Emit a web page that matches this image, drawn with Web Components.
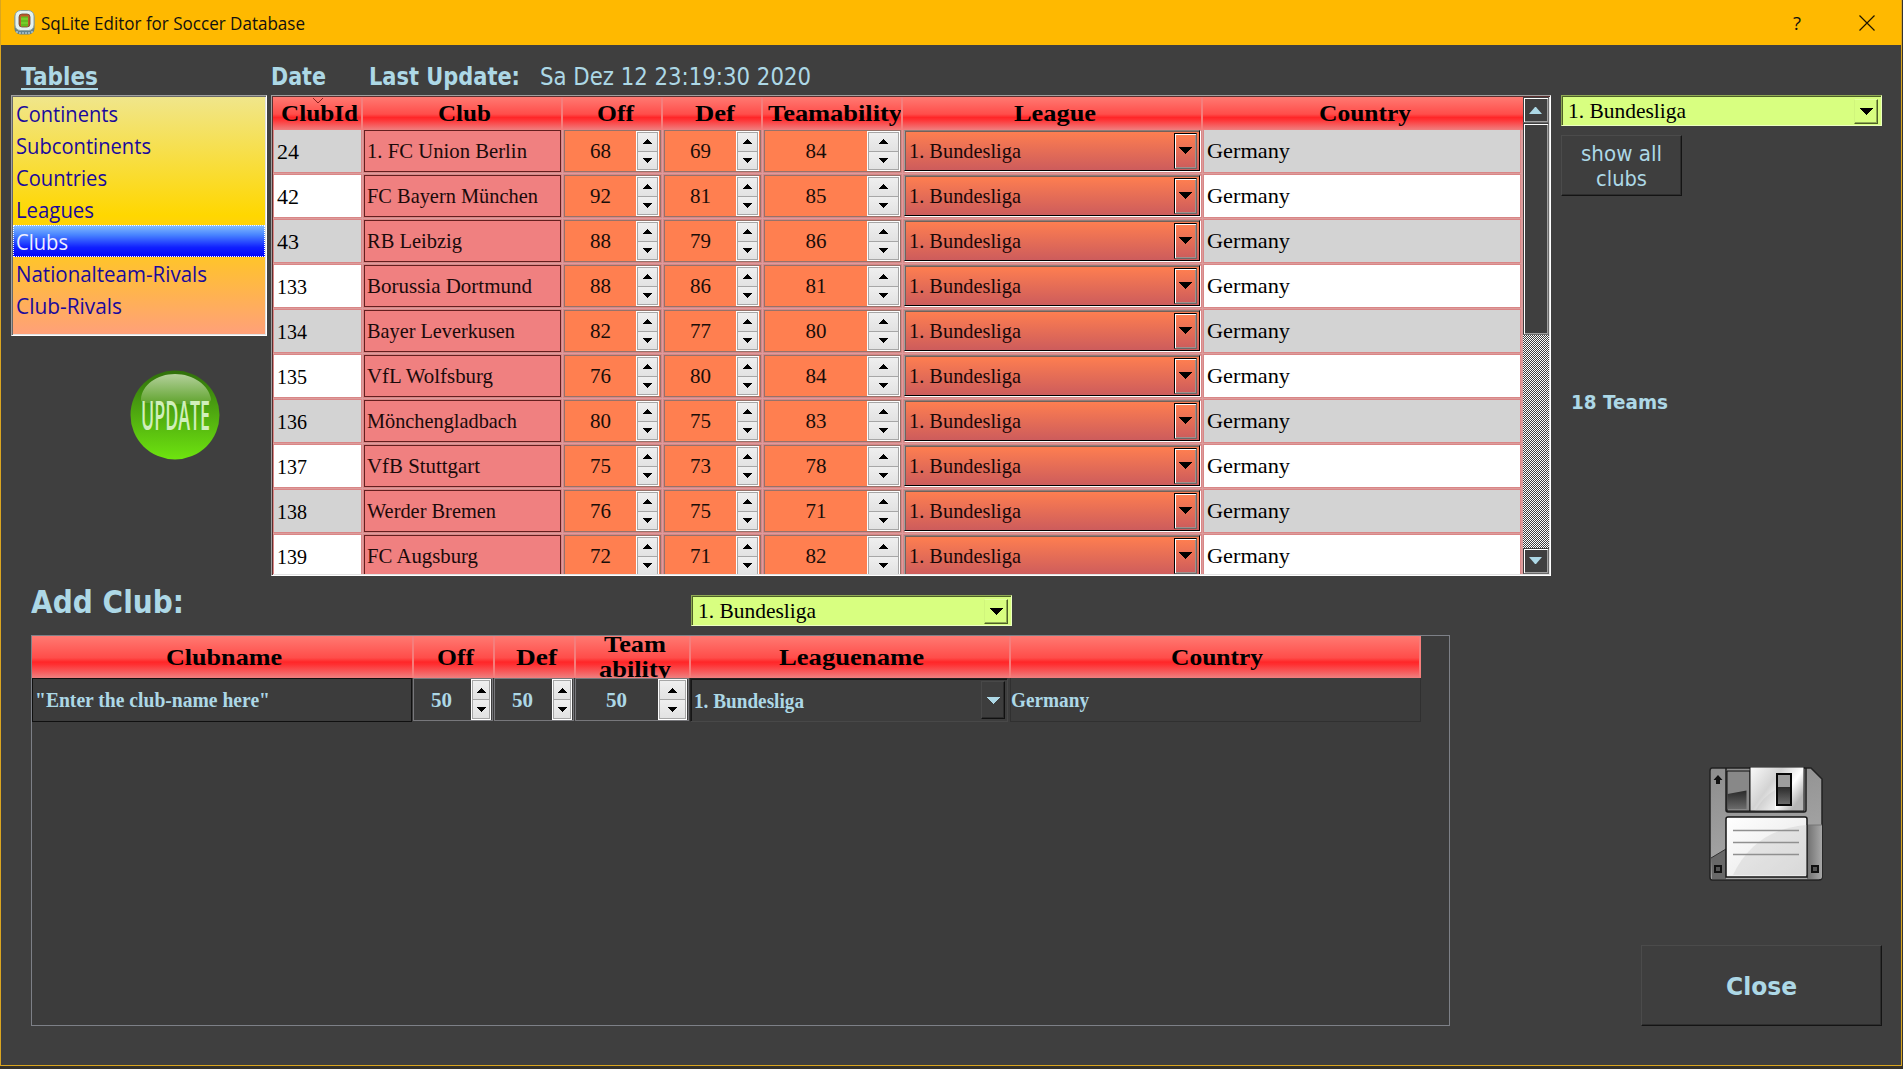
<!DOCTYPE html>
<html lang="en">
<head>
<meta charset="utf-8">
<title>SqLite Editor for Soccer Database</title>
<style>
html,body{margin:0;height:1069px;overflow:hidden;background:#35322c}
body{font-family:"Liberation Serif",serif;color:#000}
</style>
</head>
<body>
<editor-window></editor-window>
<script>
const define = (name, html, setup) => {
  const tpl = document.createElement('template');
  customElements.define(name, class extends HTMLElement {
    connectedCallback() {
      if (this.shadowRoot) return;
      const root = this.attachShadow({mode: 'open'});
      tpl.innerHTML = typeof html === 'function' ? html(this) : html;
      root.append(tpl.content.cloneNode(true));
      if (setup) setup(this, root);
    }
  });
};
const at = (el, n, d) => el.getAttribute(n) ?? d;
const fit = (w, t, extra = '') => `<fit-text w="${w}" ${extra}>${t}</fit-text>`;

define('spin-box', el => `<style>
:host{box-sizing:border-box;display:flex;height:42px;border:1px solid #96726a;background:#ff7f50;font-size:21px;color:#1a0d08;padding-right:1px}
:host([bw="33"]){padding-right:0}
:host([dark]){height:43px;background:#3d3d3d;border-color:#77777b;color:#add8e6;font-weight:bold;font-size:20px}
.v{flex:1;display:flex;align-items:center;justify-content:center}
:host([dark]) .v{padding-top:2px;padding-right:2px}
.b{width:${at(el,'bw',23)}px;box-sizing:border-box;border:1px solid #fff;display:flex;background:#a6a6a6;flex-direction:column;gap:1px;padding:1px}
.b i{flex:1;background:linear-gradient(#efefef,#e2e2e2);display:flex;align-items:center;justify-content:center}
svg{display:block}
</style><div class="v">${fit(21, el.textContent)}</div>
<div class="b"><i><svg width="9" height="5"><path d="M4 0h1v1h1v1h1v1h1v1h1v1H0V4h1V3h1V2h1V1h1z"/></svg></i><i><svg width="9" height="5"><path d="M0 0h9v1H8v1H7v1H6v1H5v1H4V4H3V3H2V2H1V1H0z"/></svg></i></div>`);

define('league-combo', el => `<style>
:host{box-sizing:border-box;display:flex;align-items:center;justify-content:space-between;height:42px;font-size:21px}
:host([kind=cell]){color:#1a0808;background:linear-gradient(#ff7f50,#cd5c5c);border:1px solid;border-color:#8f7d78 #000 #000 #a0a0a0;box-shadow:inset 1px 1px #75605a,1px 1px #fff;width:296px;height:41px;padding:1px 2px 1px 4px}
:host([kind=cell]) fit-text{margin-top:1px}
:host([kind=cell]) .b{width:23px;height:36px;border:1px solid;border-color:#000 #696969 #696969 #000;box-shadow:inset 1px 1px #fff,inset -1px -1px #a0908c;background:linear-gradient(#ff7f50,#cd5c5c)}
:host([kind=lime]){height:31px;width:321px;background:#d8ff80;border:1px solid;border-color:#90aa55 #ecffc0 #ecffc0 #90aa55;box-shadow:inset 1px 1px #4f6227;padding:1px 3px 0 6px}
:host([kind=lime]) .b{width:24px;height:25px;border:1px solid;border-color:#e2ffa0 #4f6227 #4f6227 #d0f57c;box-shadow:inset -1px -1px #90aa55}
:host([kind=dark]){height:44px;width:318px;color:#add8e6;font-weight:bold;font-size:20px;background:#3d3d3d;border:1px solid;border-color:#202020 #484848 #484848 #202020;box-shadow:inset 1px 1px #161616;padding:0 2px 0 3px}
:host([kind=dark]) fit-text{margin-top:2px}
:host([kind=dark]) .b{width:24px;height:38px;border:1px solid;border-color:#484848 #111 #111 #484848;box-shadow:inset -1px -1px #2b2b2b}
.b{box-sizing:border-box;display:flex;align-items:center;justify-content:center}
</style>${fit(at(el,'w',112), '1. Bundesliga')}<div class="b"><svg width="13" height="7"><path d="M0 0h13L7 7H6z" fill="${at(el,'kind')==='dark'?'#add8e6':'#000'}" shape-rendering="crispEdges"/></svg></div>`);

define('push-button', `<style>
:host{box-sizing:border-box;display:flex;flex-direction:column;align-items:center;justify-content:center;background:#3e3e3e;border:1px solid;border-color:#4b4b4b #141414 #141414 #4b4b4b;box-shadow:inset -1px -1px #2d2d2d;color:#add8e6;font-family:"DejaVu Sans",sans-serif}
</style><slot></slot>`);

define('header-cell', `<style>
:host{box-sizing:border-box;display:flex;flex-direction:column;align-items:center;justify-content:center;overflow:hidden;font-weight:bold;font-size:24px;line-height:25px;padding-left:4px;border-right:2px solid #f57e7c;background:linear-gradient(#ff7a72,#ff4d4a 52%,#ff2628 62%,#ff3032 68%,#ef8080)}
:host([shift]){padding-left:6px}
</style><slot></slot>`);

define('title-bar', `<style>
:host{display:flex;align-items:center;height:45px;background:#ffb900;padding:0 26px 0 13px;box-sizing:border-box;font:18px "Open Sans","Noto Sans",sans-serif;color:#111}
.t{margin:0 auto 0 6px}.q{margin-right:58px}
svg{flex:none}
</style>
<svg width="21" height="25" viewBox="0 0 21 25"><rect x=".5" y="1" width="20" height="23.500" rx="6" fill="#64838c"/><rect x="1" y=".5" width="19" height="20" rx="5.500" fill="#e4f2ef" stroke="#8fa5a2"/><path d="M3 21v2M6 22v2M9 22v2M12 22v2M15 22v2M18 21v2" stroke="#d7e6e8"/><rect x="5" y="4" width="11" height="13" rx="3" fill="#bf5a28" stroke="#70452a" stroke-width=".8"/><path d="M7 6.500h7v10H7z" fill="#63bd1e"/><path d="M7 9h7M7 13h7" stroke="#8bdc35"/></svg>
<span class="t">${fit(264,'SqLite Editor for Soccer Database')}</span><span class="q">${fit(8,'?')}</span>
<svg width="16" height="16"><path d="M.5.5l15 15M15.500.5l-15 15" stroke="#1c1500" stroke-width="1.200"/></svg>`);

define('table-list', `<style>
:host{box-sizing:border-box;display:block;width:256px;height:241px;border:1px solid;border-color:#a0a0a0 #fff #fff #a0a0a0;background:linear-gradient(#f0e68c,#ffd700 50%,#ffa07a);box-shadow:inset 1px 1px #696969,inset -1px -1px #e3e3e3;padding:1px;font:21.300px/33px "Open Sans","Noto Sans",sans-serif;color:#1a0a9c}
div{height:32px;padding-left:3px;box-sizing:border-box}
.s{color:#eef;background:linear-gradient(#87bfff,#4a86ff 30%,#1020ff 70%,#00f);outline:1px dotted #fff;outline-offset:-1px}
</style>` + [['Continents',102],['Subcontinents',135],['Countries',91],['Leagues',78],['Clubs',52],['Nationalteam-Rivals',191],['Club-Rivals',106]]
 .map(([t,w]) => `<div class="${t==='Clubs'?'s':''}">${fit(w,t)}</div>`).join(''));

const clubs = [[24,'1. FC Union Berlin',160,68,69,84],[42,'FC Bayern München',171,92,81,85],[43,'RB Leibzig',95,88,79,86],[133,'Borussia Dortmund',165,88,86,81],[134,'Bayer Leverkusen',148,82,77,80],[135,'VfL Wolfsburg',126,76,80,84],[136,'Mönchengladbach',150,80,75,83],[137,'VfB Stuttgart',113,75,73,78],[138,'Werder Bremen',129,76,75,71],[139,'FC Augsburg',111,72,71,82]];

define('club-row', el => {
  const [id,name,nw,off,def,ta] = clubs[el.getAttribute('n')];
  return `<style>
:host{display:grid;grid-template-columns:90px 200px 100px 100px 140px 300px 319px;height:45px;--f:#fff}
:host([alt]){--f:#d3d3d3}
.c{margin:0 1px 1px 0;border:1px solid #d98686;box-sizing:border-box;height:44px;background:#dca4a4}
.p{background:var(--f);display:flex;align-items:center;font-size:21.500px;padding-left:3px}
.n{box-sizing:border-box;height:42px;border:1px solid #641f1f;background:#f08080;display:flex;align-items:center;padding-left:2px;font-size:21px;color:#1a0a0a}
.id{padding-top:2px;height:44px}
</style><div class="c p id">${fit(id>99?30:22,id)}</div><div class="c"><div class="n">${fit(nw,name)}</div></div>
<div class="c"><spin-box>${off}</spin-box></div><div class="c"><spin-box>${def}</spin-box></div><div class="c"><spin-box bw="33">${ta}</spin-box></div>
<div class="c"><league-combo kind="cell"></league-combo></div><div class="c p">${fit(83,'Germany')}</div>`;
});

define('scroll-bar', `<style>
:host{display:flex;flex-direction:column;width:26px;background:repeating-conic-gradient(#404040 0 25%,#fff 0 50%) 0 0/2px 2px}
.b{box-sizing:border-box;width:26px;height:26px;background:#3f3f3f;border:1px solid;border-color:#3f3f3f #696969 #696969 #3f3f3f;box-shadow:inset 1px 1px #fff,inset -1px -1px #a0a0a0;display:flex;align-items:center;justify-content:center;padding-right:1px}
.t{height:212px}.d{margin-top:auto}
.d svg{margin-top:-2px}
</style><div class="b"><svg width="13" height="7"><path d="M6 0h1l6 7H0z" fill="#add8e6"/></svg></div><div class="b t"></div><div class="b d"><svg width="13" height="7"><path d="M0 0h13L7 7H6z" fill="#add8e6"/></svg></div>`);

define('club-table', `<style>
:host{box-sizing:border-box;display:flex;width:1280px;height:481px;border:1px solid;border-color:#a0a0a0 #fff #fff #a0a0a0;background:#3f3f3f;padding:1px;box-shadow:inset 1px 1px #5c2f2f,inset -1px -1px #e3e3e3}
.g{width:1250px;height:477px;overflow:hidden;background:#dc9c9c}
.h{display:grid;grid-template-columns:90px 200px 100px 100px 140px 300px 320px;height:33px;position:relative;z-index:1}
.r{margin-top:-1px}
header-cell{position:relative}
header-cell svg{position:absolute;left:39px;top:1px}
header-cell:last-child{border-right:0}
</style><div class="g"><div class="h"><header-cell>${fit(77,'ClubId')}<svg width="12" height="7"><path d="M1 0l5 5 5-5" fill="none" stroke="#8c2020"/></svg></header-cell>` +
 [['Club',53],['Off',37,'shift'],['Def',40,'shift'],['Teamability',134,'shift'],['League',82,'shift'],['Country',92]].map(([t,w,s='']) => `<header-cell ${s}>${fit(w,t)}</header-cell>`).join('') +
 `</div><div class="r">${clubs.map((c,i) => `<club-row n="${i}" ${i%2?'':'alt'}></club-row>`).join('')}</div></div><scroll-bar></scroll-bar>`);

define('update-button', `<style>:host{display:grid;width:90px;height:90px}svg,fit-text{grid-area:1/1}svg{display:block}
fit-text{align-self:center;justify-self:center;font:600 39px/40px "Open Sans",sans-serif;color:#d0efbb}</style>
<svg width="90" height="90" viewBox="0 0 90 90"><defs><linearGradient id="a" x2="0" y2="1"><stop stop-color="#2f6f0a"/><stop offset=".35" stop-color="#479a10"/><stop offset="1" stop-color="#6ee40f"/></linearGradient><linearGradient id="b" x2="0" y2="1"><stop stop-color="#b4d09c"/><stop offset="1" stop-color="#5fa32c"/></linearGradient></defs><circle cx="45" cy="45" r="44.500" fill="url(#a)"/><path d="M11 29C12 15 27 4 45 4s34 11 36 25c1 5-12 5-36 5s-35 0-34-5z" fill="url(#b)"/></svg>${fit(69,'UPDATE')}`);

define('save-button', `<style>:host{display:block;width:114px;height:114px}svg{display:block}</style>
<svg width="114" height="114" viewBox="0 0 114 114"><defs><linearGradient id="a" x2=".3" y2="1"><stop stop-color="#8d8d8d"/><stop offset="1" stop-color="#a9a9a9"/></linearGradient><linearGradient id="b" x2="1" y2=".6"><stop stop-color="#fafafa"/><stop offset=".45" stop-color="#d3d3d3"/><stop offset=".75" stop-color="#fff"/><stop offset="1" stop-color="#b4b4b4"/></linearGradient><linearGradient id="c" x2="1" y2="1"><stop stop-color="#fff"/><stop offset="1" stop-color="#e4e4e4"/></linearGradient><linearGradient id="d" x2="0" y2="1"><stop stop-color="#6a6a6a"/><stop offset="1" stop-color="#1d1d1d"/></linearGradient><linearGradient id="f" x2="0" y2="1"><stop stop-color="#2a2a2a"/><stop offset="1" stop-color="#6a6a6a"/></linearGradient><linearGradient id="e"><stop stop-color="#707070"/><stop offset="1" stop-color="#a8a8a8"/></linearGradient></defs>
<path d="M3 1h99l11 11v98q0 3-3 3H3q-2 0-2-3V4q0-3 2-3z" fill="url(#a)" stroke="#222" stroke-width="1.500"/>
<path d="M98 58h15v52q0 2-2 2H98z" fill="url(#e)"/><path d="M98 58h15" stroke="#777"/><path d="M2 91l15-9v30H3z" fill="#686868"/><path d="M2 91l15-9" stroke="#333"/>
<path d="M17 1v42q0 2 2 2h76q2 0 2-2V1" fill="none" stroke="#1b1b1b" stroke-width="1.500"/>
<path d="M18 4h23v40H18z" fill="#888" stroke="#111"/><path d="M18.500 27l19-3.500V42h-19z" fill="url(#f)"/>
<path d="M41 0h54v44H41z" fill="url(#b)" stroke="#151515"/><path d="M46 44q8-14 20-21v20z" fill="#aaa" opacity=".2"/>
<path d="M68 7h14v31H68z" fill="#9d9d9d" stroke="#080808" stroke-width="2"/><path d="M69 20h12v17H69z" fill="url(#f)"/>
<path d="M17 110V52q0-2 2-2h77q2 0 2 2v58z" fill="url(#c)" stroke="#151515" stroke-width="1.500"/><path d="M24 108q22-46 74-50v50z" fill="#bbb" opacity=".28"/>
<path d="M24 63.500h66M24 75.500h66M24 87.500h66" stroke="#909090" stroke-width="1.600"/>
<path d="M9 8l4.500 5H11v4H7v-4H4.500z" fill="#111"/><path d="M6 99h6v6H6zM103 99h6v6h-6z" fill="#555" stroke="#111" stroke-width="2"/></svg>`);

define('add-table', `<style>
:host{box-sizing:border-box;display:block;width:1419px;height:391px;border:1px solid #7d8087;background:#3c3c3c}
.h,.r{display:grid;grid-template-columns:382px 81px 81px 115px 320px 410px}
.h{height:42px}.r{height:44px;width:1389px;grid-template-columns:381px 81px 81px 115px 320px 411px}
.n{box-sizing:border-box;width:380px;border:1px solid #101010;display:flex;align-items:center;padding-left:2px;font-weight:bold;font-size:20px;color:#add8e6}
.c{box-sizing:border-box;display:flex;align-items:center;font-weight:bold;font-size:20px;color:#add8e6;border:1px solid #303030;border-top:0;padding-top:2px}
.n{padding-top:1px}
spin-box{margin-right:1px}
</style><div class="h">${[['Clubname',116],['Off',37],['Def',41]].map(([t,w]) => `<header-cell>${fit(w,t)}</header-cell>`).join('')}<header-cell>${fit(62,'Team')}${fit(72,'ability')}</header-cell><header-cell style="padding-left:2px">${fit(145,'Leaguename')}</header-cell><header-cell>${fit(92,'Country')}</header-cell></div>
<div class="r"><div class="n">${fit(235,'"Enter the club-name here"')}</div><spin-box dark bw="20">50</spin-box><spin-box dark bw="20">50</spin-box><spin-box dark bw="29">50</spin-box><league-combo kind="dark" w="110"></league-combo><div class="c">${fit(78,'Germany')}</div></div>`);

define('editor-window', `<style>
:host{display:block;box-sizing:border-box;width:1902px;height:1066px;background:#3f3f3f;border:1px solid #d9a520;border-top:0;font-family:"Liberation Serif",serif}
.top,.bot{display:flex}.top{padding-left:10px;height:531px}
.lab{height:50px;display:flex;color:#add8e6;font:bold 24px/36px "DejaVu Sans",sans-serif;box-sizing:border-box;padding-top:14px}
.left{width:260px}.right{margin-left:10px}
update-button{margin:34px 0 0 119px}
.teams{color:#add8e6;font:bold 20px/24px "DejaVu Sans",sans-serif;margin:194px 0 0 10px}
.bot{padding:0 19px 0 30px;justify-content:space-between}
.ah{display:flex;height:59px;color:#add8e6;font:bold 32px/52px "DejaVu Sans",sans-serif}
.ah league-combo{margin:19px 0 0 507px;color:#000;font:21px "Liberation Serif",serif}
.br{display:flex;flex-direction:column;align-items:flex-end}
save-button{margin:191px 59px 64px 0}
</style><title-bar></title-bar>
<div class="top"><div class="left"><div class="lab" style="padding-left:10px">${fit(77,'Tables','line')}</div><table-list></table-list><update-button></update-button></div>
<div><div class="lab">${fit(55,'Date')}<span style="width:43px"></span>${fit(151,'Last Update:')}<span style="width:20px"></span><span style="font-weight:normal">${fit(271,'Sa Dez 12 23:19:30 2020')}</span></div><club-table></club-table></div>
<div class="right"><div class="lab"></div><league-combo kind="lime" w="118"></league-combo><push-button style="width:121px;height:61px;margin-top:9px;padding-top:3px;font-size:20.500px;line-height:25px">${fit(81,'show all')}${fit(51,'clubs')}</push-button><div class="teams">${fit(97,'18 Teams')}</div></div></div>
<div class="bot"><div><div class="ah">${fit(153,'Add Club:')}<league-combo kind="lime" w="118"></league-combo></div><add-table></add-table></div>
<div class="br"><save-button></save-button><push-button style="width:241px;height:81px;padding-top:2px;font-size:24px;font-weight:bold">${fit(71,'Close')}</push-button></div></div>`);

/* Text whose advance is stretched or condensed to a set width. */
define('fit-text', el => `<style>:host{display:inline-block;flex:none;white-space:nowrap;width:${el.getAttribute('w')}px}
span{display:inline-block;transform-origin:0 50%}:host([line]) span{text-decoration:underline;text-underline-offset:3px;text-decoration-thickness:2px}</style><span><slot></slot></span>`,
 (el, root) => {
  const s = root.querySelector('span');
  const w = s.getBoundingClientRect().width;
  if (w) s.style.transform = `scaleX(${el.getAttribute('w') / w})`;
 });
</script>
</body>
</html>
